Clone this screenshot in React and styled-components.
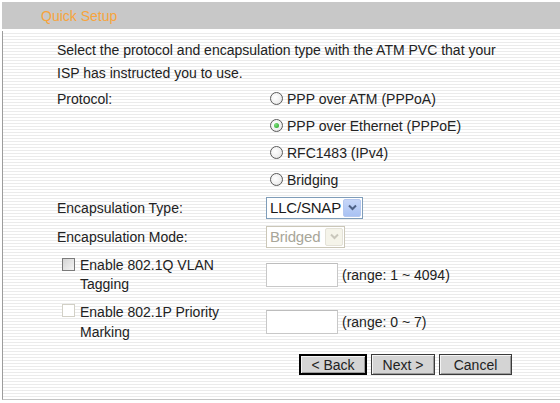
import React from "react";
import styled, { createGlobalStyle, css } from "styled-components";

const Global = createGlobalStyle`
  html, body { margin: 0; padding: 0; background: #fff; }
  body { font-family: "Liberation Sans", Arial, sans-serif; font-size: 14px; color: #222; }
`;

const Page = styled.div`
  width: 560px;
  height: 403px;
  padding-top: 2px;
  box-sizing: border-box;
  display: flex;
  flex-direction: column;
  background: #fff;
`;

const Header = styled.div`
  height: 27px;
  margin-left: 2px;
  background: #c8c8c8;
  display: flex;
  align-items: center;
  padding-left: 39px;
  color: #f7a43c;
  font-size: 14px;
`;

const Panel = styled.div`
  margin: 2px 0 0 2px;
  height: 369px;
  border-left: 1px solid #9c9c9c;
  border-bottom: 1px solid #c4c4c4;
  background: repeating-linear-gradient(to bottom, #ffffff 0 2px, #ebebeb 2px 3px);
  padding: 8px 0 0 54px;
  box-sizing: border-box;
`;

const Intro = styled.p`
  margin: 0;
  line-height: 23px;
  width: 445px;
`;

const Form = styled.div`
  display: grid;
  grid-template-columns: 209px auto;
  align-items: center;
`;

const Label = styled.div`
  align-self: ${(p) => (p.$top ? "start" : "center")};
  padding-top: ${(p) => (p.$top ? "6px" : "0")};
  color: #222;
`;

const Cell = styled.div`
  height: ${(p) => p.$h}px;
  display: flex;
  align-items: center;
  gap: 4px;
`;

const RadioList = styled.div`
  display: flex;
  flex-direction: column;
`;

const RadioRow = styled.label`
  height: 27px;
  display: flex;
  align-items: center;
  gap: 4px;
  padding-left: 4px;
`;

const RadioDot = styled.span`
  width: 13px;
  height: 13px;
  box-sizing: border-box;
  border-radius: 50%;
  border: 1px solid #5a5a5a;
  background: radial-gradient(circle at 40% 40%, #ffffff 0%, #f0f0f0 55%, #d2d2d2 100%);
  display: flex;
  align-items: center;
  justify-content: center;
  &::after {
    content: "";
    width: 5px;
    height: 5px;
    border-radius: 50%;
    background: ${(p) => (p.$on ? "radial-gradient(circle at 35% 35%, #7fe07f, #21a121)" : "transparent")};
  }
`;

const Select = styled.div`
  height: 22px;
  box-sizing: border-box;
  display: flex;
  align-items: stretch;
  background: #fff;
  width: 97px;
  border: 1px solid #7f9db9;
  color: #1a1a1a;
  ${(p) =>
    p.$disabled &&
    css`
      width: 79px;
      border-color: #cbc7b8;
      color: #a8a699;
    `}
`;

const SelectText = styled.span`
  flex: 1;
  display: flex;
  align-items: center;
  padding-left: 3px;
  font-size: 15px;
  letter-spacing: -0.2px;
`;

const SelectBtn = styled.span`
  width: 16px;
  margin: 1px;
  border-radius: 2px;
  display: flex;
  align-items: center;
  justify-content: center;
  background: ${(p) => (p.$disabled ? "#f5f4ea" : "linear-gradient(to bottom, #c6d6f8, #a9c2f3)")};
  border: 1px solid ${(p) => (p.$disabled ? "#e4e2d8" : "#b5c8f0")};
`;

const Check = styled.span`
  width: 13px;
  height: 13px;
  box-sizing: border-box;
  flex: none;
  border: 1px solid ${(p) => (p.$disabled ? "#d2d0c6" : "#7a7a7a")};
  background: ${(p) => (p.$disabled ? "#fff" : "linear-gradient(135deg, #d4d4d4, #f4f4f4)")};
  margin-top: 2px;
`;

const CheckLabel = styled.div`
  display: flex;
  gap: 5px;
  align-items: flex-start;
  padding-left: 5px;
  align-self: center;
`;

const CheckText = styled.span`
  width: 150px;
  line-height: ${(p) => p.$lh}px;
`;

const TextBox = styled.span`
  width: 72px;
  height: 24px;
  box-sizing: border-box;
  border: 1px solid #c8c8c8;
  border-top-color: #bdbdbd;
  background: #fff;
  display: inline-block;
`;

const Buttons = styled.div`
  display: flex;
  gap: 4px;
  padding-left: 242px;
  margin-top: 9px;
`;

const Button = styled.button`
  font-family: "Liberation Sans", Arial, sans-serif;
  font-size: 14px;
  color: #222;
  height: 21px;
  width: ${(p) => p.$w}px;
  padding: 0;
  background: #d4d4d4;
  border: 1px solid #3a3a3a;
  box-shadow: inset 1px 1px 0 #f4f4f4, inset -1px -1px 0 #9a9a9a;
  ${(p) =>
    p.$default &&
    css`
      border: 2px solid #000;
    `}
`;

const Chevron = ({ color }) => (
  <svg width="9" height="7" viewBox="0 0 9 7">
    <path d="M1 1.5 L4.5 5 L8 1.5" fill="none" stroke={color} strokeWidth="2" />
  </svg>
);

const Radio = ({ on, children }) => (
  <RadioRow>
    <RadioDot $on={on} />
    {children}
  </RadioRow>
);

export default function App() {
  return (
    <>
      <Global />
      <Page>
        <Header>Quick Setup</Header>
        <Panel>
          <Intro>
            Select the protocol and encapsulation type with the ATM PVC that your ISP has instructed you to use.
          </Intro>
          <Form>
            <Label $top>Protocol:</Label>
            <RadioList>
              <Radio>PPP over ATM (PPPoA)</Radio>
              <Radio on>PPP over Ethernet (PPPoE)</Radio>
              <Radio>RFC1483 (IPv4)</Radio>
              <Radio>Bridging</Radio>
            </RadioList>

            <Label>Encapsulation Type:</Label>
            <Cell $h={29}>
              <Select>
                <SelectText>LLC/SNAP</SelectText>
                <SelectBtn>
                  <Chevron color="#4d6185" />
                </SelectBtn>
              </Select>
            </Cell>

            <Label>Encapsulation Mode:</Label>
            <Cell $h={29}>
              <Select $disabled>
                <SelectText>Bridged</SelectText>
                <SelectBtn $disabled>
                  <Chevron color="#c9c7bc" />
                </SelectBtn>
              </Select>
            </Cell>

            <CheckLabel>
              <Check />
              <CheckText $lh={19}>Enable 802.1Q VLAN Tagging</CheckText>
            </CheckLabel>
            <Cell $h={47}>
              <TextBox />
              (range: 1 ~ 4094)
            </Cell>

            <CheckLabel>
              <Check $disabled />
              <CheckText $lh={20}>Enable 802.1P Priority Marking</CheckText>
            </CheckLabel>
            <Cell $h={47}>
              <TextBox />
              (range: 0 ~ 7)
            </Cell>
          </Form>
          <Buttons>
            <Button $default $w={68}>&lt; Back</Button>
            <Button $w={64}>Next &gt;</Button>
            <Button $w={73}>Cancel</Button>
          </Buttons>
        </Panel>
      </Page>
    </>
  );
}
